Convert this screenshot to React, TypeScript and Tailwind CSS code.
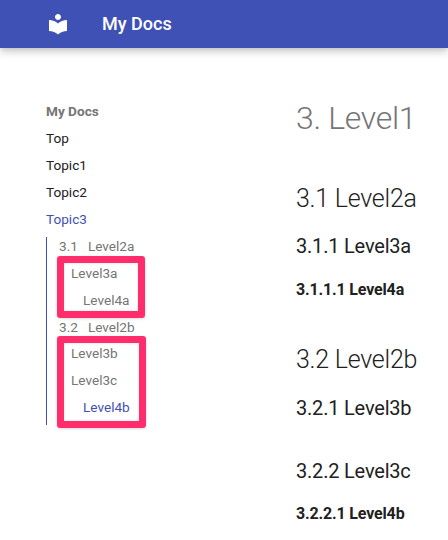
const NavRow = ({ label, active, className = "" }: { label: string; active?: boolean; className?: string }) => (
    <div className={`h-[27px] leading-[27px] ${active ? "text-[#3f51b5]" : ""} ${className}`}>{label}</div>
);

const Highlight = ({ className }: { className: string }) => (
    <div
        className={`absolute left-[-2px] rounded-[3px] border-[7px] border-[#ff2d6b] shadow-[0_1px_3px_rgba(0,0,0,0.15),inset_0_0_3px_rgba(0,0,0,0.12)] ${className}`}
    />
);

export default function App() {
    return (
        <div className="h-[540px] overflow-hidden bg-white font-['Roboto',sans-serif] text-[#212121]">
            <header className="relative z-10 flex h-12 items-center bg-[#3f51b5] pl-[46px] shadow-[0_0_4px_rgba(0,0,0,0.1),0_4px_8px_rgba(0,0,0,0.2)]">
                <svg viewBox="0 0 24 24" className="h-6 w-6 fill-white">
                    <path d="M12 11.55C9.64 9.35 6.48 8 3 8v11c3.48 0 6.64 1.35 9 3.55 2.36-2.19 5.52-3.55 9-3.55V8c-3.48 0-6.64 1.35-9 3.55zM12 8c1.66 0 3-1.34 3-3s-1.34-3-3-3-3 1.34-3 3 1.34 3 3 3z" />
                </svg>
                <span className="mb-[2px] ml-8 text-[18px] font-medium text-white">My Docs</span>
            </header>

            <div className="flex">
                {/* Sidebar */}
                <nav className="w-[296px] shrink-0 pl-[46px] pt-[50px] text-[13.6px]">
                    <div className="h-[27px] font-bold leading-[27px] text-[#757575]">My Docs</div>
                    <NavRow label="Top" />
                    <NavRow label="Topic1" />
                    <NavRow label="Topic2" />
                    <NavRow label="Topic3" active />

                    <div className="mt-1 w-[110px] border-l border-[#3f51b5] pb-1 pl-3 text-[#757575]">
                        <div className="h-[23px] leading-[18px]">
                            3.1<span className="ml-[10px]">Level2a</span>
                        </div>
                        <div className="relative">
                            <NavRow label="Level3a" className="pl-3" />
                            <NavRow label="Level4a" className="pl-6" />
                            <Highlight className="-top-1 h-[62px] w-[88px]" />
                        </div>
                        <div className="h-[26px] leading-[27px]">
                            3.2<span className="ml-[10px]">Level2b</span>
                        </div>
                        <div className="relative">
                            <NavRow label="Level3b" className="pl-3" />
                            <NavRow label="Level3c" className="pl-3" />
                            <NavRow label="Level4b" active className="pl-6" />
                            <Highlight className="-top-1 h-[92px] w-[89px]" />
                        </div>
                    </div>
                </nav>

                {/* Content */}
                <main className="flex-1 pt-[50px]">
                    <h1 className="text-[32px] font-light leading-[40px] tracking-[-0.01em] text-[#757575]">3. Level1</h1>
                    <h2 className="mt-[45px] text-[25px] font-light leading-[32px] tracking-[-0.01em]">3.1 Level2a</h2>
                    <h3 className="mt-[18px] text-[20px] font-normal leading-[26px] tracking-[-0.01em]">3.1.1 Level3a</h3>
                    <h4 className="mt-[21px] text-[16px] font-bold leading-[20px] tracking-[-0.01em]">3.1.1.1 Level4a</h4>
                    <h2 className="mt-[44px] text-[25px] font-light leading-[32px] tracking-[-0.01em]">3.2 Level2b</h2>
                    <h3 className="mt-[19px] text-[20px] font-normal leading-[26px] tracking-[-0.01em]">3.2.1 Level3b</h3>
                    <h3 className="mt-[37px] text-[20px] font-normal leading-[26px] tracking-[-0.01em]">3.2.2 Level3c</h3>
                    <h4 className="mt-[20px] text-[16px] font-bold leading-[20px] tracking-[-0.01em]">3.2.2.1 Level4b</h4>
                </main>
            </div>
        </div>
    );
}
